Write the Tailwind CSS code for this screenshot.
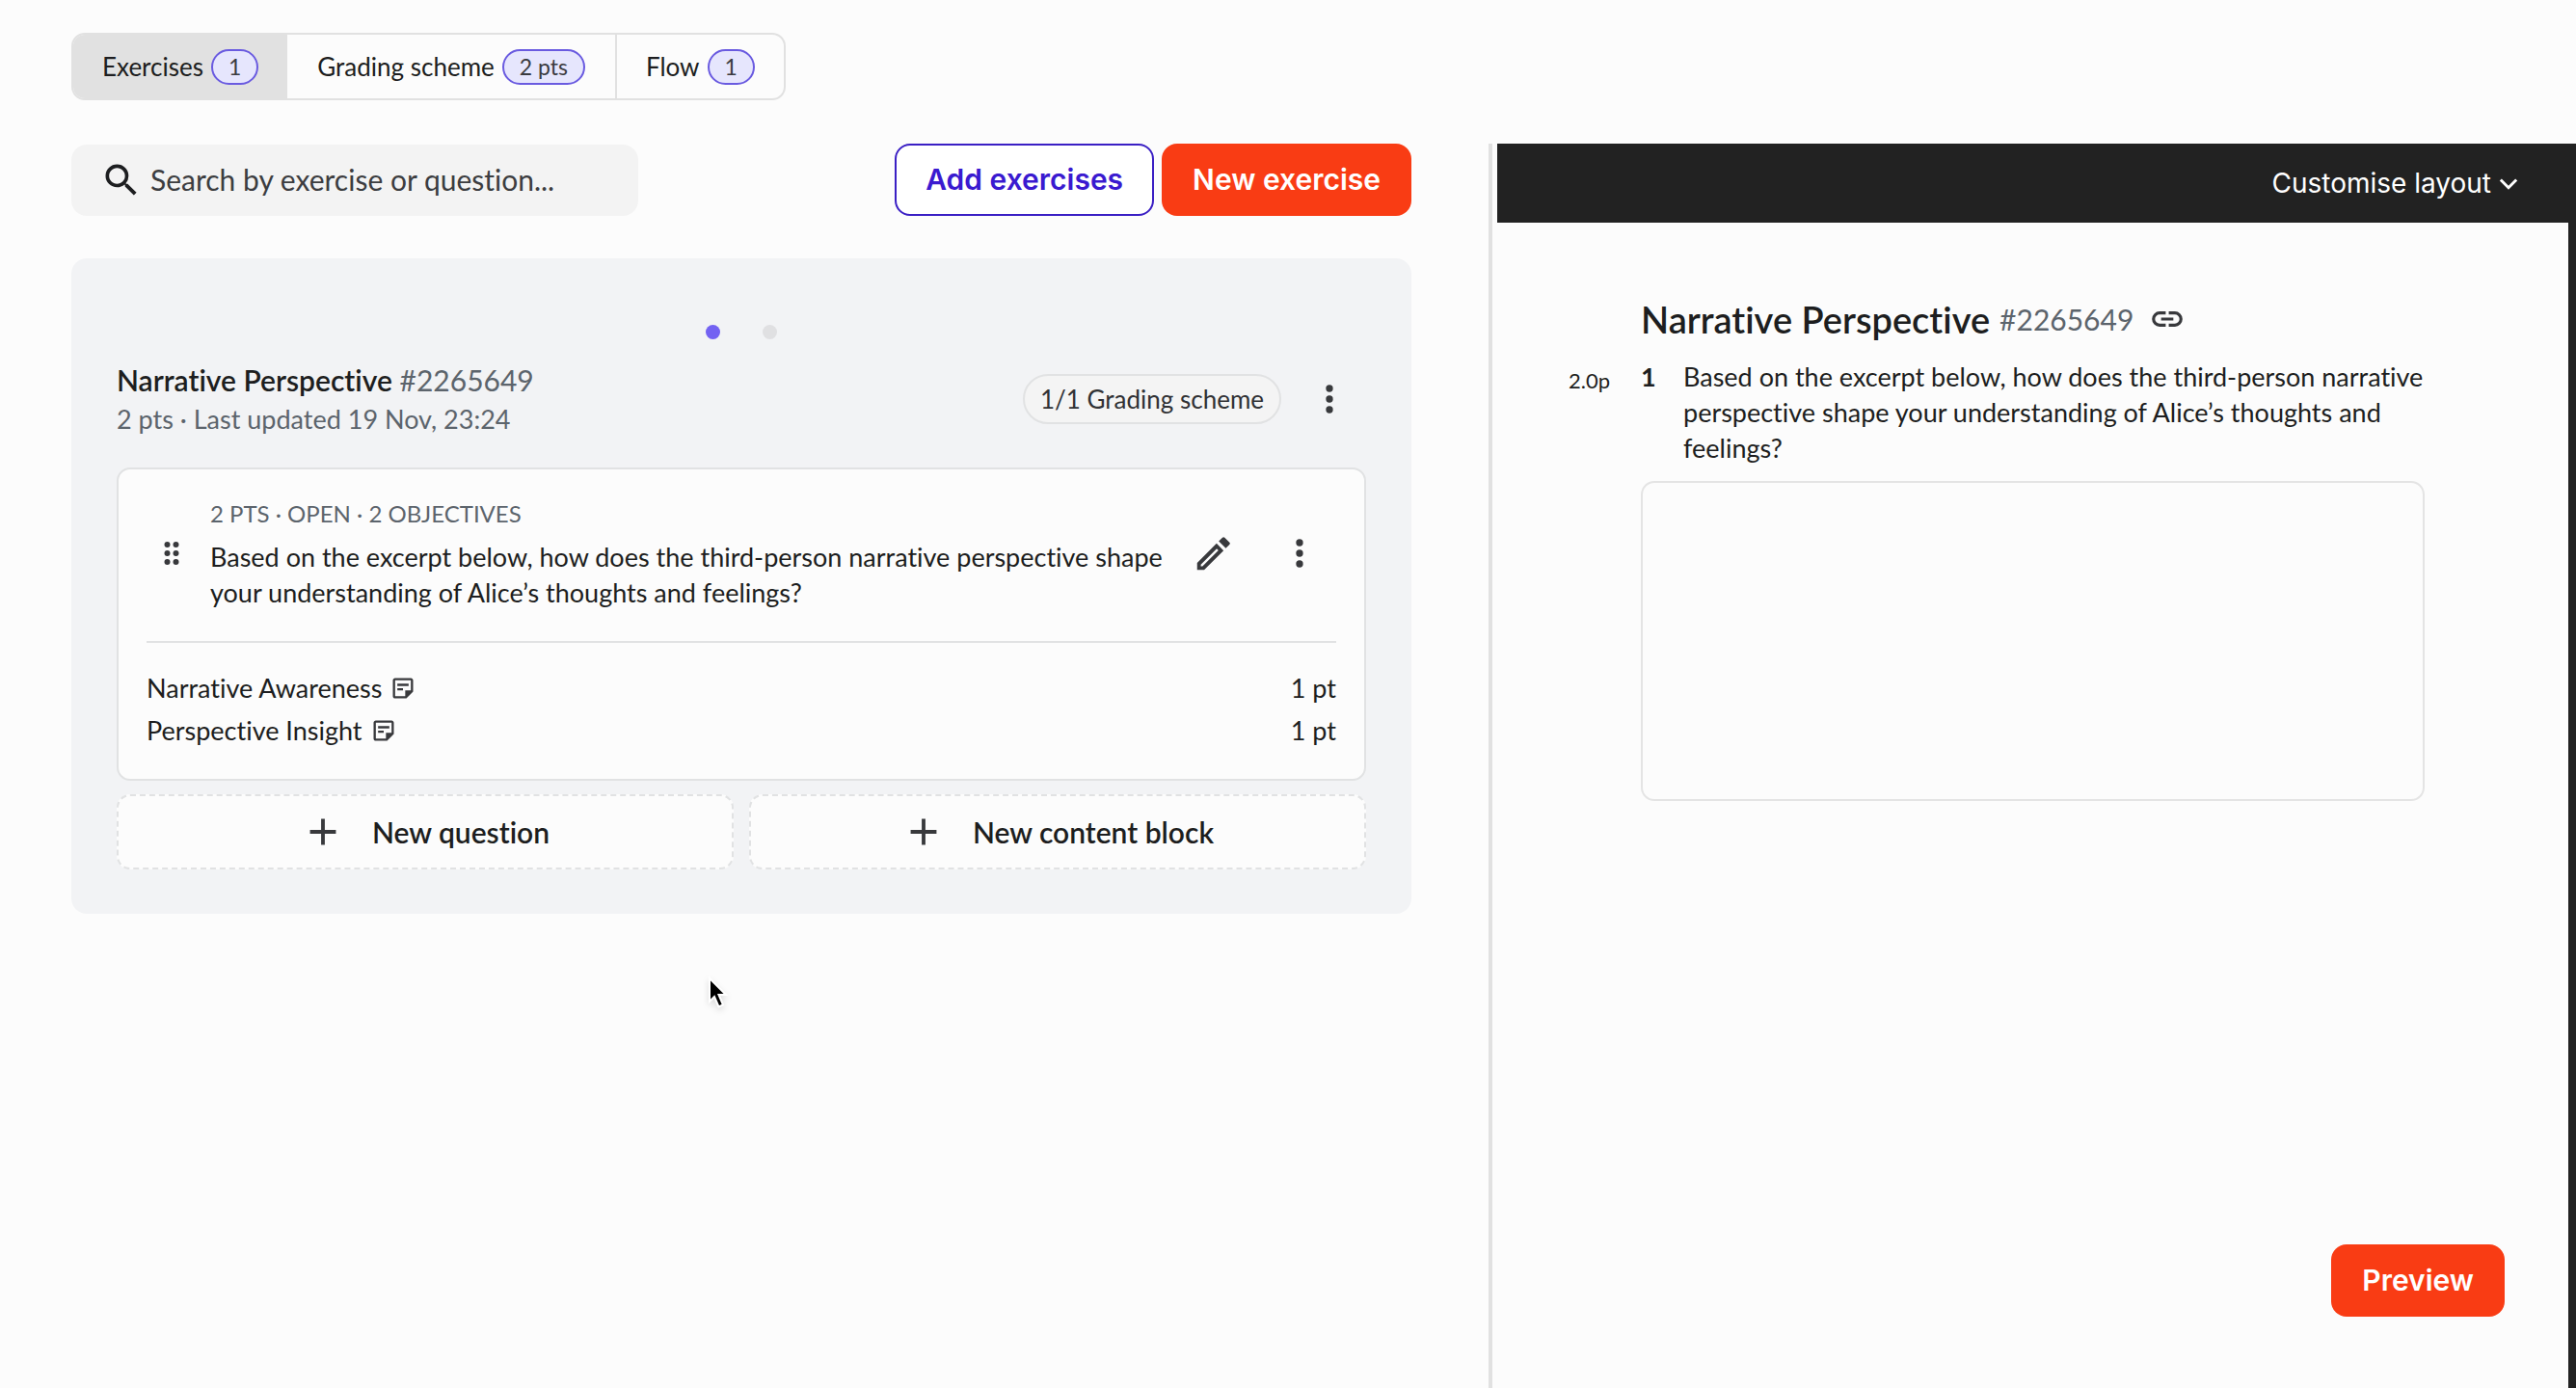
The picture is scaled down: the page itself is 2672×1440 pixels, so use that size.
<!DOCTYPE html>
<html lang="en">
<head>
<meta charset="utf-8">
<meta name="viewport" content="width=device-width, initial-scale=1">
<title>Exercises</title>
<script src="https://cdn.jsdelivr.net/npm/@tailwindcss/browser@4"></script>
</head>
<body class="flex min-h-screen flex-col bg-[#fcfcfc] pt-[34px] font-['Lato',sans-serif] text-[27px] text-[#1d1e20] [font-variant-ligatures:none]">

<svg class="hidden" aria-hidden="true">
  <symbol id="kebab" viewBox="0 0 24 24"><circle cx="12" cy="6" r="2"/><circle cx="12" cy="12" r="2"/><circle cx="12" cy="18" r="2"/></symbol>
  <symbol id="plus" viewBox="0 0 24 24"><path d="M19 13h-6v6h-2v-6H5v-2h6V5h2v6h6z"/></symbol>
  <symbol id="note" viewBox="0 0 24 24"><path d="M19 5v9h-5v5H5V5h14m0-2H5c-1.100 0-2 .9-2 2v14c0 1.100.9 2 2 2h10l6-6V5c0-1.100-.9-2-2-2zM12 14H7v-2h5v2zm5-4H7V8h10v2z"/></symbol>
</svg>

<nav class="flex px-[74px] text-[26px]">
  <div class="flex h-[70px] overflow-hidden rounded-[14px] border-2 border-[#e1e1e1]">
    <button class="flex items-center gap-2 bg-[#e1e1e1] px-[30px]">Exercises <span class="rounded-full border-2 border-[#6a5be0] bg-[#e6e6fd] px-4 text-[23px] leading-[33px] text-[#3a3b40]">1</span></button>
    <button class="flex items-center gap-2 px-[31px]">Grading scheme <span class="rounded-full border-2 border-[#6a5be0] bg-[#e6e6fd] px-4 text-[23px] leading-[33px] text-[#3a3b40]">2 pts</span></button>
    <button class="flex items-center gap-2 border-l-2 border-[#e1e1e1] px-[30px]">Flow <span class="rounded-full border-2 border-[#6a5be0] bg-[#e6e6fd] px-4 text-[23px] leading-[33px] text-[#3a3b40]">1</span></button>
  </div>
</nav>

<div class="mt-[45px] grid grow grid-cols-[minmax(0,1544fr)_minmax(0,1128fr)]">
  <main class="pr-20 pl-[74px]">
    <div class="flex items-center gap-2">
      <label class="flex h-[74px] w-[588px] items-center gap-2 rounded-2xl bg-[#f3f3f3] pl-[30px]">
        <svg class="size-11 shrink-0" viewBox="0 0 24 24" fill="currentColor" aria-hidden="true"><path d="M15.500 14h-.79l-.28-.27A6.470 6.470 0 0 0 16 9.500 6.500 6.500 0 1 0 9.500 16c1.610 0 3.090-.59 4.230-1.570l.27.28v.79l5 4.990L20.490 19zm-6 0C7.010 14 5 11.990 5 9.500S7.010 5 9.500 5 14 7.010 14 9.500 11.990 14 9.500 14"/></svg>
        <input type="text" aria-label="Search" placeholder="Search by exercise or question..." class="w-full bg-transparent text-[30px] outline-none placeholder:text-[#3c3d40]">
      </label>
      <button class="ml-auto h-[75px] rounded-2xl border-2 border-[#3a1fc4] bg-white px-[30px] font-['Inter',sans-serif] text-[30px] font-semibold text-[#3a1ad0]">Add exercises</button>
      <button class="h-[75px] rounded-2xl bg-[#f93c14] px-8 font-['Inter',sans-serif] text-[30px] font-semibold text-white">New exercise</button>
    </div>

    <section class="mt-11 rounded-2xl bg-[#f2f3f5] px-[47px] pt-[69px] pb-[46px]">
      <div class="flex justify-center gap-11">
        <span class="size-[15px] rounded-full bg-[#7362f2]"></span>
        <span class="size-[15px] rounded-full bg-[#e0e0e2]"></span>
      </div>
      <header class="mt-[21px] flex items-center pr-4">
        <div class="grow text-[#5c646c]">
          <h2 class="text-[30px] leading-[42px]"><span class="font-semibold text-[#1d1e20]">Narrative Perspective</span> #2265649</h2>
          <p class="leading-10">2 pts · Last updated 19 Nov, 23:24</p>
        </div>
        <span class="mr-7 rounded-full border-2 border-[#e1e2e3] bg-[#f4f4f4] px-4 text-[26px] leading-[48px] text-[#303134]">1/1 Grading scheme</span>
        <button aria-label="Exercise options"><svg class="size-11" fill="#38393c"><use href="#kebab"/></svg></button>
      </header>

      <article class="mt-[30px] rounded-[14px] border-2 border-[#e1e2e3] bg-[#fcfcfc] px-[29px] pt-7 pb-7">
        <div class="flex items-center pr-4 pb-8 pl-2">
          <button aria-label="Move question" class="mr-[22px]"><svg class="size-9" viewBox="0 0 24 24" fill="#38393c"><circle cx="9" cy="6" r="2"/><circle cx="15" cy="6" r="2"/><circle cx="9" cy="12" r="2"/><circle cx="15" cy="12" r="2"/><circle cx="9" cy="18" r="2"/><circle cx="15" cy="18" r="2"/></svg></button>
          <div class="w-0 grow">
            <p class="text-2xl leading-9 text-[#5c646c]">2 PTS · OPEN · 2 OBJECTIVES</p>
            <p class="mt-2 leading-[37px]">Based on the excerpt below, how does the third-person narrative perspective shape your understanding of Alice’s thoughts and feelings?</p>
          </div>
          <button aria-label="Edit question" class="mr-11 ml-4"><svg class="size-[46px]" viewBox="0 0 24 24" fill="#38393c" fill-rule="evenodd"><path d="M3 21v-3.800L13.500 6.700l3.800 3.800L6.800 21zM5 18.100v.9h.9l8.600-8.600-.9-.9z"/><path d="M14.700 5.500L16.700 3.500q.6-.6 1.200 0l2.600 2.600q.6.600 0 1.200L18.500 9.300z"/></svg></button>
          <button aria-label="Question options"><svg class="size-11" fill="#38393c"><use href="#kebab"/></svg></button>
        </div>
        <ul class="border-t-2 border-[#e1e2e3] pt-[25px] leading-[44px]">
          <li class="flex items-center gap-2">Narrative Awareness <svg class="size-7" fill="#38393c"><use href="#note"/></svg><span class="ml-auto">1 pt</span></li>
          <li class="flex items-center gap-2">Perspective Insight <svg class="size-7" fill="#38393c"><use href="#note"/></svg><span class="ml-auto">1 pt</span></li>
        </ul>
      </article>

      <div class="mt-[14px] grid grid-cols-2 gap-4 text-[30px] font-semibold">
        <button class="flex h-[78px] items-center justify-center gap-7 rounded-[14px] border-2 border-dashed border-[#e1e2e3] bg-[#fcfcfc]"><svg class="size-[46px]" fill="#38393c"><use href="#plus"/></svg>New question</button>
        <button class="flex h-[78px] items-center justify-center gap-7 rounded-[14px] border-2 border-dashed border-[#e1e2e3] bg-[#fcfcfc]"><svg class="size-[46px]" fill="#38393c"><use href="#plus"/></svg>New content block</button>
      </div>
    </section>
  </main>

  <aside class="relative flex flex-col border-l-4 border-[#e1e1e1] pl-[5px]">
    <div class="flex h-[82px] items-center justify-end bg-[#222222] pr-[56px]">
      <button class="flex items-center gap-1 font-['Inter',sans-serif] text-[28px] text-white">Customise layout <svg class="size-7" viewBox="0 0 24 24" fill="none" stroke="currentColor" stroke-width="2.500" aria-hidden="true"><path d="M5 9l7 7 7-7"/></svg></button>
    </div>
    <div class="grow border-r-8 border-[#222222] pt-[75px] pr-[149px] pl-[74px]">
      <h1 class="flex items-center pl-[75px] leading-[50px]"><span class="text-[38px] font-semibold">Narrative Perspective</span><span class="ml-[10px] text-[30px] text-[#5c646c]">#2265649</span>
        <a href="#2265649" aria-label="Link to exercise" class="ml-4"><svg class="size-[38px]" viewBox="0 0 24 24" fill="#38393c"><path d="M11 17H7q-2.075 0-3.537-1.463T2 12t1.463-3.537T7 7h4v2H7q-1.250 0-2.125.875T4 12t.875 2.125T7 15h4zm-3-4v-2h8v2zm5 4v-2h4q1.250 0 2.125-.875T20 12t-.875-2.125T17 9h-4V7h4q2.075 0 3.538 1.463T22 12t-1.463 3.538T17 17z"/></svg></a>
      </h1>
      <div class="mt-4 flex leading-[37px]">
        <span class="w-[75px] text-[22px] leading-[46px]">2.0p</span>
        <span class="w-11 font-bold">1</span>
        <label for="answer" class="-mr-4 w-0 grow">Based on the excerpt below, how does the third-person narrative perspective shape your understanding of Alice’s thoughts and feelings?</label>
      </div>
      <div class="mt-4 flex pl-[75px]">
        <textarea id="answer" class="h-[332px] w-full resize-none rounded-[14px] border-2 border-[#e4e4e4] bg-transparent p-4"></textarea>
      </div>
    </div>
    <button class="absolute right-[74px] bottom-[74px] h-[75px] rounded-2xl bg-[#f93c14] px-8 font-['Inter',sans-serif] text-[30px] font-semibold text-white">Preview</button>
  </aside>
</div>

<svg class="absolute top-[1012px] left-[733px] h-9 w-6 drop-shadow-md" viewBox="0 0 24 36" aria-hidden="true"><path d="M3 3v24l5-5 4.500 10.500 4.500-2L12.500 20H20z" fill="#000" stroke="#fff" stroke-width="2"/></svg>
</body>
</html>
